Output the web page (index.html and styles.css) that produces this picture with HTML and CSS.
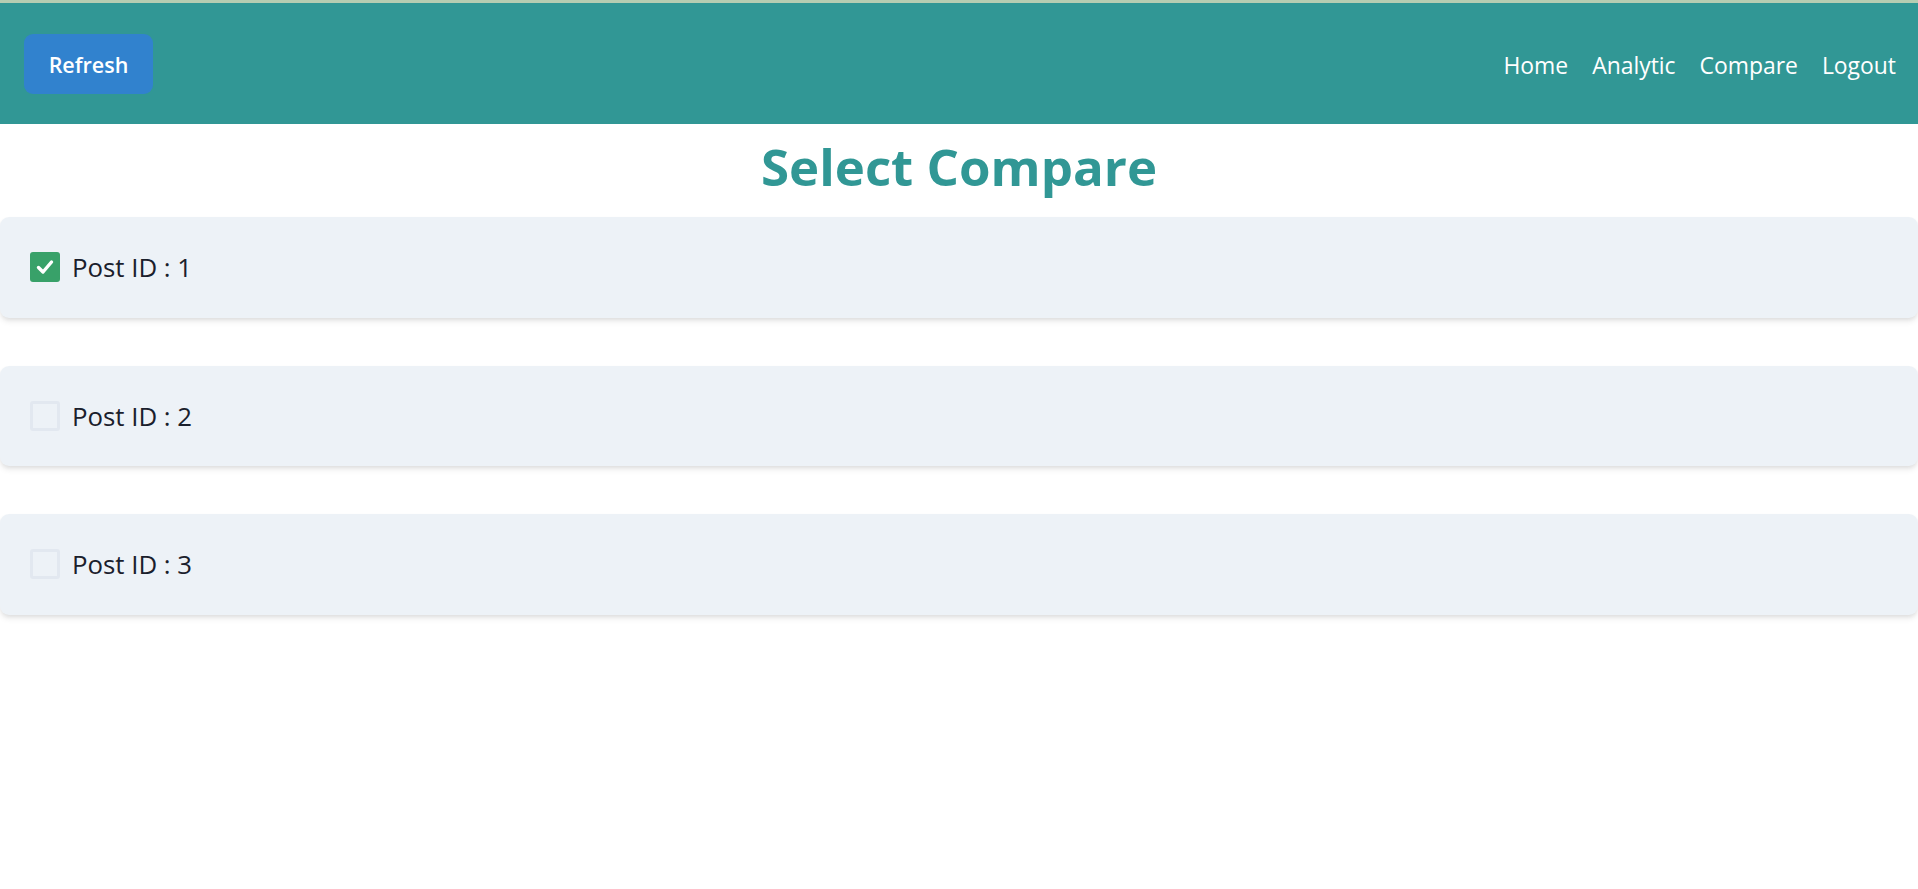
FILE: index.html
```html
<!DOCTYPE html>
<html lang="en">
<head>
<meta charset="utf-8">
<title>Select Compare</title>
<link rel="stylesheet" href="styles.css">
</head>
<body>
<div class="topline"></div>
<header class="navbar">
  <button class="btn-refresh" type="button">Refresh</button>
  <nav class="nav-links">
    <a href="#">Home</a>
    <a href="#">Analytic</a>
    <a href="#">Compare</a>
    <a href="#">Logout</a>
  </nav>
</header>
<main class="content">
  <h1 class="title">Select Compare</h1>
  <div class="card">
    <label class="check-row">
      <span class="box checked">
        <svg viewBox="0 0 30 30" width="30" height="30"><path d="M8.5 15.5 L13 20 L21.5 10" fill="none" stroke="#fff" stroke-width="3.4" stroke-linecap="round" stroke-linejoin="round"/></svg>
      </span>
      <span class="label-text">Post ID : 1</span>
    </label>
  </div>
  <div class="card">
    <label class="check-row">
      <span class="box"></span>
      <span class="label-text">Post ID : 2</span>
    </label>
  </div>
  <div class="card">
    <label class="check-row">
      <span class="box"></span>
      <span class="label-text">Post ID : 3</span>
    </label>
  </div>
</main>
</body>
</html>
```

FILE: styles.css
```css
* { box-sizing: border-box; }
html, body {
  margin: 0;
  padding: 0;
  background: #ffffff;
  font-family: "Open Sans", "Noto Sans", "Liberation Sans", sans-serif;
}
.topline {
  height: 3px;
  background: #b6cdb2;
}
.navbar {
  height: 121px;
  background: #319795;
  display: flex;
  align-items: center;
  justify-content: space-between;
  padding: 0 22px 0 24px;
}
.btn-refresh {
  width: 129px;
  height: 60px;
  margin-top: 1px;
  border: none;
  border-radius: 9px;
  background: #3182ce;
  color: #ffffff;
  font-family: "Open Sans", "Noto Sans", sans-serif;
  font-weight: 600;
  font-size: 21.5px;
  padding: 0;
}
.nav-links {
  display: flex;
  gap: 24px;
  margin-top: 3px;
}
.nav-links a {
  color: #ffffff;
  text-decoration: none;
  font-size: 22.9px;
}
.content {
  display: flex;
  flex-direction: column;
}
.title {
  margin: 10px 0 18px;
  text-align: center;
  color: #319795;
  font-size: 51px;
  font-weight: 700;
  line-height: 65px;
}
.card {
  height: 100.5px;
  margin-bottom: 48px;
  background: #edf2f7;
  border-radius: 9px;
  box-shadow: 0 4px 6px -1px rgba(0,0,0,0.1), 0 2px 4px -1px rgba(0,0,0,0.06);
  display: flex;
  align-items: center;
  padding: 0 30px;
}
.check-row {
  display: flex;
  align-items: center;
  gap: 12px;
}
.box {
  width: 30px;
  height: 30px;
  border: 3px solid #e2e8f0;
  border-radius: 3px;
  display: flex;
  align-items: center;
  justify-content: center;
}
.box.checked {
  border: none;
  background: #38a169;
}
.label-text {
  color: #1a202c;
  font-size: 25.8px;
}
```
